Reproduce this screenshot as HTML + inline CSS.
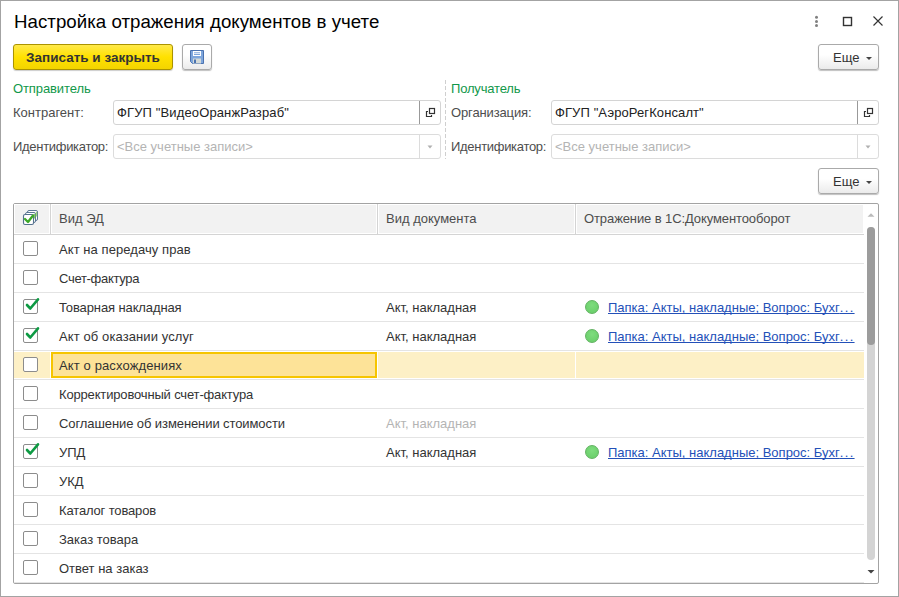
<!DOCTYPE html>
<html><head><meta charset="utf-8">
<style>
*{margin:0;padding:0;box-sizing:border-box}
html,body{width:899px;height:597px;overflow:hidden;background:#fff}
body{position:relative;font-family:"Liberation Sans",sans-serif;font-size:13px;color:#333}
.abs{position:absolute}
.win{position:absolute;left:0;top:0;width:899px;height:597px;border:1px solid #a3a3a3}
.title{position:absolute;left:14px;top:10px;font-size:18.67px;letter-spacing:0.04px;color:#000;white-space:nowrap;line-height:24px}
.btn{position:absolute;height:26px;border:1px solid #aaa;border-radius:3px;background:linear-gradient(#fff 40%,#ebebeb);box-shadow:0 1px 1px rgba(0,0,0,.25)}
.ybtn{position:absolute;left:13px;top:44px;width:160px;height:26px;border:1px solid #ab9300;border-radius:3px;background:linear-gradient(#ffe94a,#ffe100 50%,#f3d400);box-shadow:0 1px 1px rgba(0,0,0,.2);font-weight:bold;font-size:13.5px;color:#333;text-align:center;line-height:25px;white-space:nowrap}
.lbl{position:absolute;white-space:nowrap;line-height:16px;color:#4d4d4d}
.grp{position:absolute;white-space:nowrap;line-height:16px;color:#11984a}
.inp{position:absolute;height:25px;border:1px solid #d4d4d4;border-radius:3px;background:#fff}
.inp .t{position:absolute;left:3px;top:4px;line-height:16px;white-space:nowrap;color:#222}
.inp .b{position:absolute;right:0;top:0;width:21px;height:23px;border-left:1px solid #c8c8c8}
.tbl{position:absolute;left:13px;top:203px;width:866px;height:381px;border:1px solid #a3a3a3;border-radius:2px}
.hdr{position:absolute;top:0;height:31px;background:#fff;border-bottom:1px solid #d4d4d4}
.hc{position:absolute;top:0;height:30px;border:1px solid #fff;background:#f2f2f2}
.sel .sf{position:absolute;top:1px;height:26px;background:#fdf0c6}
.cur{position:absolute;left:37px;top:1px;width:326px;height:26px;border:2px solid #f6c500;background:#fde398}
.hs{position:absolute;top:0;width:1px;height:30px;background:#d4d4d4}
.ht{position:absolute;top:6.5px;line-height:16px;white-space:nowrap;color:#4d4d4d}
.row{position:absolute;left:0;width:850px;height:29px;border-bottom:1px solid #e4e4e4}
.cell{position:absolute;top:7px;line-height:16px;white-space:nowrap}
.cb{position:absolute;left:9px;top:6px;width:15px;height:15px;border:1.5px solid #8c8c8c;border-radius:2px;background:#fff}
.link{color:#2350b8;text-decoration:underline;text-decoration-skip-ink:none}
.dots{letter-spacing:1.3px}
.dot{position:absolute;left:571px;top:7px;width:14px;height:14px;border-radius:50%;background:radial-gradient(circle at 50% 35%,#7edc7e,#66cc66);border:1px solid #62b262}
</style></head><body>
<div class="win"></div>
<div class="title">Настройка отражения документов в учете</div>

<!-- window controls -->
<svg class="abs" style="left:810px;top:10px" width="80" height="22">
  <circle cx="6.5" cy="7.3" r="1.5" fill="#808080"/>
  <circle cx="6.5" cy="11.4" r="1.5" fill="#808080"/>
  <circle cx="6.5" cy="15.4" r="1.5" fill="#808080"/>
  <rect x="33.5" y="7.5" width="8" height="8" fill="none" stroke="#333" stroke-width="1.4"/>
  <path d="M63.5 6.5 L72.5 15.5 M72.5 6.5 L63.5 15.5" stroke="#333" stroke-width="1.15" fill="none"/>
</svg>

<div class="ybtn">Записать и закрыть</div>
<div class="btn" style="left:182px;top:44px;width:30px">
  <svg class="abs" style="left:6px;top:4px" width="16" height="16" viewBox="0 0 16 16">
    <path d="M1.5 1.5 H14.5 V14.5 H3.5 L1.5 12.5 Z" fill="#7ea6dc" stroke="#4a72b0" stroke-width="1"/>
    <rect x="4" y="2" width="8" height="5" fill="#fff"/>
    <path d="M5 3.8 H11 M5 5.5 H11" stroke="#7ea6dc" stroke-width="1"/>
    <rect x="4" y="9.5" width="8" height="5" fill="#d4dad8"/>
    <rect x="5" y="10.5" width="2" height="3.5" fill="#4a72b0"/>
  </svg>
</div>
<div class="btn" style="left:818px;top:44px;width:61px">
  <span class="abs" style="left:14px;top:4.5px;line-height:16px;color:#333">Еще</span>
  <svg class="abs" style="left:47px;top:12px" width="7" height="4"><path d="M0 0H6L3 3Z" fill="#444"/></svg>
</div>

<!-- sender -->
<div class="grp" style="left:13px;top:81px;letter-spacing:-0.1px">Отправитель</div>
<div class="lbl" style="left:13px;top:105px">Контрагент:</div>
<div class="inp" style="left:113px;top:100px;width:328px">
  <span class="t" style="letter-spacing:0.13px">ФГУП "ВидеоОранжРазраб"</span>
  <div class="b" style="border-left-color:#999"><svg class="abs" style="left:4px;top:5px" width="14" height="14"><rect x="5.5" y="2.5" width="5" height="5" fill="none" stroke="#333" stroke-width="1.2"/><path d="M4 5.5H2.5V10.5H7.5V9" fill="none" stroke="#333" stroke-width="1.2"/></svg></div>
</div>
<div class="lbl" style="left:13px;top:139px;letter-spacing:-0.3px">Идентификатор:</div>
<div class="inp" style="left:113px;top:134px;width:328px;border-color:#dcdcdc">
  <span class="t" style="color:#b4b4b4">&lt;Все учетные записи&gt;</span>
  <div class="b" style="border-left-color:#dcdcdc"><svg class="abs" style="left:7px;top:10px" width="7" height="5"><path d="M0.5 0.5H5.5L3 3.5Z" fill="#b0b0b0"/></svg></div>
</div>

<!-- dashed separator -->
<div class="abs" style="left:445px;top:80px;width:1px;height:79px;background:repeating-linear-gradient(#cfcfcf 0 4px,transparent 4px 6px)"></div>

<!-- receiver -->
<div class="grp" style="left:451px;top:81px;letter-spacing:-0.18px">Получатель</div>
<div class="lbl" style="left:451px;top:105px;letter-spacing:-0.13px">Организация:</div>
<div class="inp" style="left:551px;top:100px;width:328px">
  <span class="t" style="letter-spacing:0.1px">ФГУП "АэроРегКонсалт"</span>
  <div class="b" style="border-left-color:#999"><svg class="abs" style="left:4px;top:5px" width="14" height="14"><rect x="5.5" y="2.5" width="5" height="5" fill="none" stroke="#333" stroke-width="1.2"/><path d="M4 5.5H2.5V10.5H7.5V9" fill="none" stroke="#333" stroke-width="1.2"/></svg></div>
</div>
<div class="lbl" style="left:451px;top:139px;letter-spacing:-0.3px">Идентификатор:</div>
<div class="inp" style="left:551px;top:134px;width:328px;border-color:#dcdcdc">
  <span class="t" style="color:#b4b4b4">&lt;Все учетные записи&gt;</span>
  <div class="b" style="border-left-color:#dcdcdc"><svg class="abs" style="left:7px;top:10px" width="7" height="5"><path d="M0.5 0.5H5.5L3 3.5Z" fill="#b0b0b0"/></svg></div>
</div>

<div class="btn" style="left:818px;top:168px;width:61px">
  <span class="abs" style="left:14px;top:4.5px;line-height:16px;color:#333">Еще</span>
  <svg class="abs" style="left:47px;top:12px" width="7" height="4"><path d="M0 0H6L3 3Z" fill="#444"/></svg>
</div>

<!-- table -->
<div class="tbl" id="tbl">
  <div class="hdr" style="left:0;width:850px"></div>
  <div class="hc" style="left:0;width:36px"></div>
  <div class="hs" style="left:36px"></div>
  <div class="hc" style="left:37px;width:326px"></div>
  <div class="hs" style="left:363px"></div>
  <div class="hc" style="left:364px;width:197px"></div>
  <div class="hs" style="left:561px"></div>
  <div class="hc" style="left:562px;width:288px"></div>
  <svg class="abs" style="left:6px;top:3px" width="22" height="22" viewBox="0 0 22 22">
    <rect x="7.5" y="3.5" width="10" height="10" rx="1.5" fill="#fff" stroke="#5b7894" stroke-width="1"/>
    <rect x="5.5" y="5.5" width="10" height="10" rx="1.5" fill="#fff" stroke="#5b7894" stroke-width="1"/>
    <path d="M16.5 5 V9.5" stroke="#9ad87c" stroke-width="1.3"/>
    <path d="M14.5 7 V11.5" stroke="#84cf62" stroke-width="1.3"/>
    <rect x="3.5" y="7.5" width="10" height="10" rx="1.5" fill="#fff" stroke="#55728e" stroke-width="1.1"/>
    <path d="M5 12 L8 15 L13 8.5" fill="none" stroke="#3ca828" stroke-width="2.3" stroke-linecap="round" stroke-linejoin="round"/>
  </svg>
  <div class="ht" style="left:45px">Вид ЭД</div>
  <div class="ht" style="left:372px">Вид документа</div>
  <div class="ht" style="left:570px;letter-spacing:-0.1px">Отражение в 1С:Документооборот</div>
  <div class="row" style="top:31px"><div class="cb"></div><div class="cell" style="left:45px;letter-spacing:0.07px">Акт на передачу прав</div></div>
  <div class="row" style="top:60px"><div class="cb"></div><div class="cell" style="left:45px;letter-spacing:-0.3px">Счет-фактура</div></div>
  <div class="row" style="top:89px"><div class="cb"><svg class="abs" style="left:-1px;top:-3px" width="17" height="17"><path d="M4 8 L7.3 11.5 L15 2.3" fill="none" stroke="#0d9a43" stroke-width="2.6" stroke-linecap="round" stroke-linejoin="round"/></svg></div><div class="cell" style="left:45px;letter-spacing:-0.11px">Товарная накладная</div><div class="cell" style="left:372px">Акт, накладная</div><div class="dot"></div><div class="cell link" style="left:594px">Папка: Акты, накладные; Вопрос: Бухг<span class="dots">...</span></div></div>
  <div class="row" style="top:118px"><div class="cb"><svg class="abs" style="left:-1px;top:-3px" width="17" height="17"><path d="M4 8 L7.3 11.5 L15 2.3" fill="none" stroke="#0d9a43" stroke-width="2.6" stroke-linecap="round" stroke-linejoin="round"/></svg></div><div class="cell" style="left:45px;letter-spacing:0.1px">Акт об оказании услуг</div><div class="cell" style="left:372px">Акт, накладная</div><div class="dot"></div><div class="cell link" style="left:594px">Папка: Акты, накладные; Вопрос: Бухг<span class="dots">...</span></div></div>
  <div class="row sel" style="top:147px"><div class="sf" style="left:0;width:36px"></div><div class="cur"></div><div class="sf" style="left:364px;width:197px"></div><div class="sf" style="left:562px;width:288px"></div><div class="cb"></div><div class="cell" style="left:45px;letter-spacing:0.12px">Акт о расхождениях</div></div>
  <div class="row" style="top:176px"><div class="cb"></div><div class="cell" style="left:45px;letter-spacing:-0.16px">Корректировочный счет-фактура</div></div>
  <div class="row" style="top:205px"><div class="cb"></div><div class="cell" style="left:45px;letter-spacing:-0.09px">Соглашение об изменении стоимости</div><div class="cell" style="left:372px;color:#b4b4b4">Акт, накладная</div></div>
  <div class="row" style="top:234px"><div class="cb"><svg class="abs" style="left:-1px;top:-3px" width="17" height="17"><path d="M4 8 L7.3 11.5 L15 2.3" fill="none" stroke="#0d9a43" stroke-width="2.6" stroke-linecap="round" stroke-linejoin="round"/></svg></div><div class="cell" style="left:45px">УПД</div><div class="cell" style="left:372px">Акт, накладная</div><div class="dot"></div><div class="cell link" style="left:594px">Папка: Акты, накладные; Вопрос: Бухг<span class="dots">...</span></div></div>
  <div class="row" style="top:263px"><div class="cb"></div><div class="cell" style="left:45px">УКД</div></div>
  <div class="row" style="top:292px"><div class="cb"></div><div class="cell" style="left:45px;letter-spacing:-0.15px">Каталог товаров</div></div>
  <div class="row" style="top:321px"><div class="cb"></div><div class="cell" style="left:45px">Заказ товара</div></div>
  <div class="row" style="top:350px"><div class="cb"></div><div class="cell" style="left:45px">Ответ на заказ</div></div>
  <svg class="abs" style="left:852px;top:8px" width="10" height="6"><path d="M1.5 4.8H8.5L5 1.3Z" fill="#bbb"/></svg>
  <div class="abs" style="left:853px;top:23px;width:8px;height:333px;border-radius:4px;background:#d4d4d4"></div>
  <div class="abs" style="left:853px;top:23px;width:8px;height:118px;border-radius:4px;background:#9c9c9c"></div>
  <svg class="abs" style="left:852px;top:365px" width="10" height="6"><path d="M1.5 1H8.5L5 4.6Z" fill="#444"/></svg>
</div>
</body></html>
